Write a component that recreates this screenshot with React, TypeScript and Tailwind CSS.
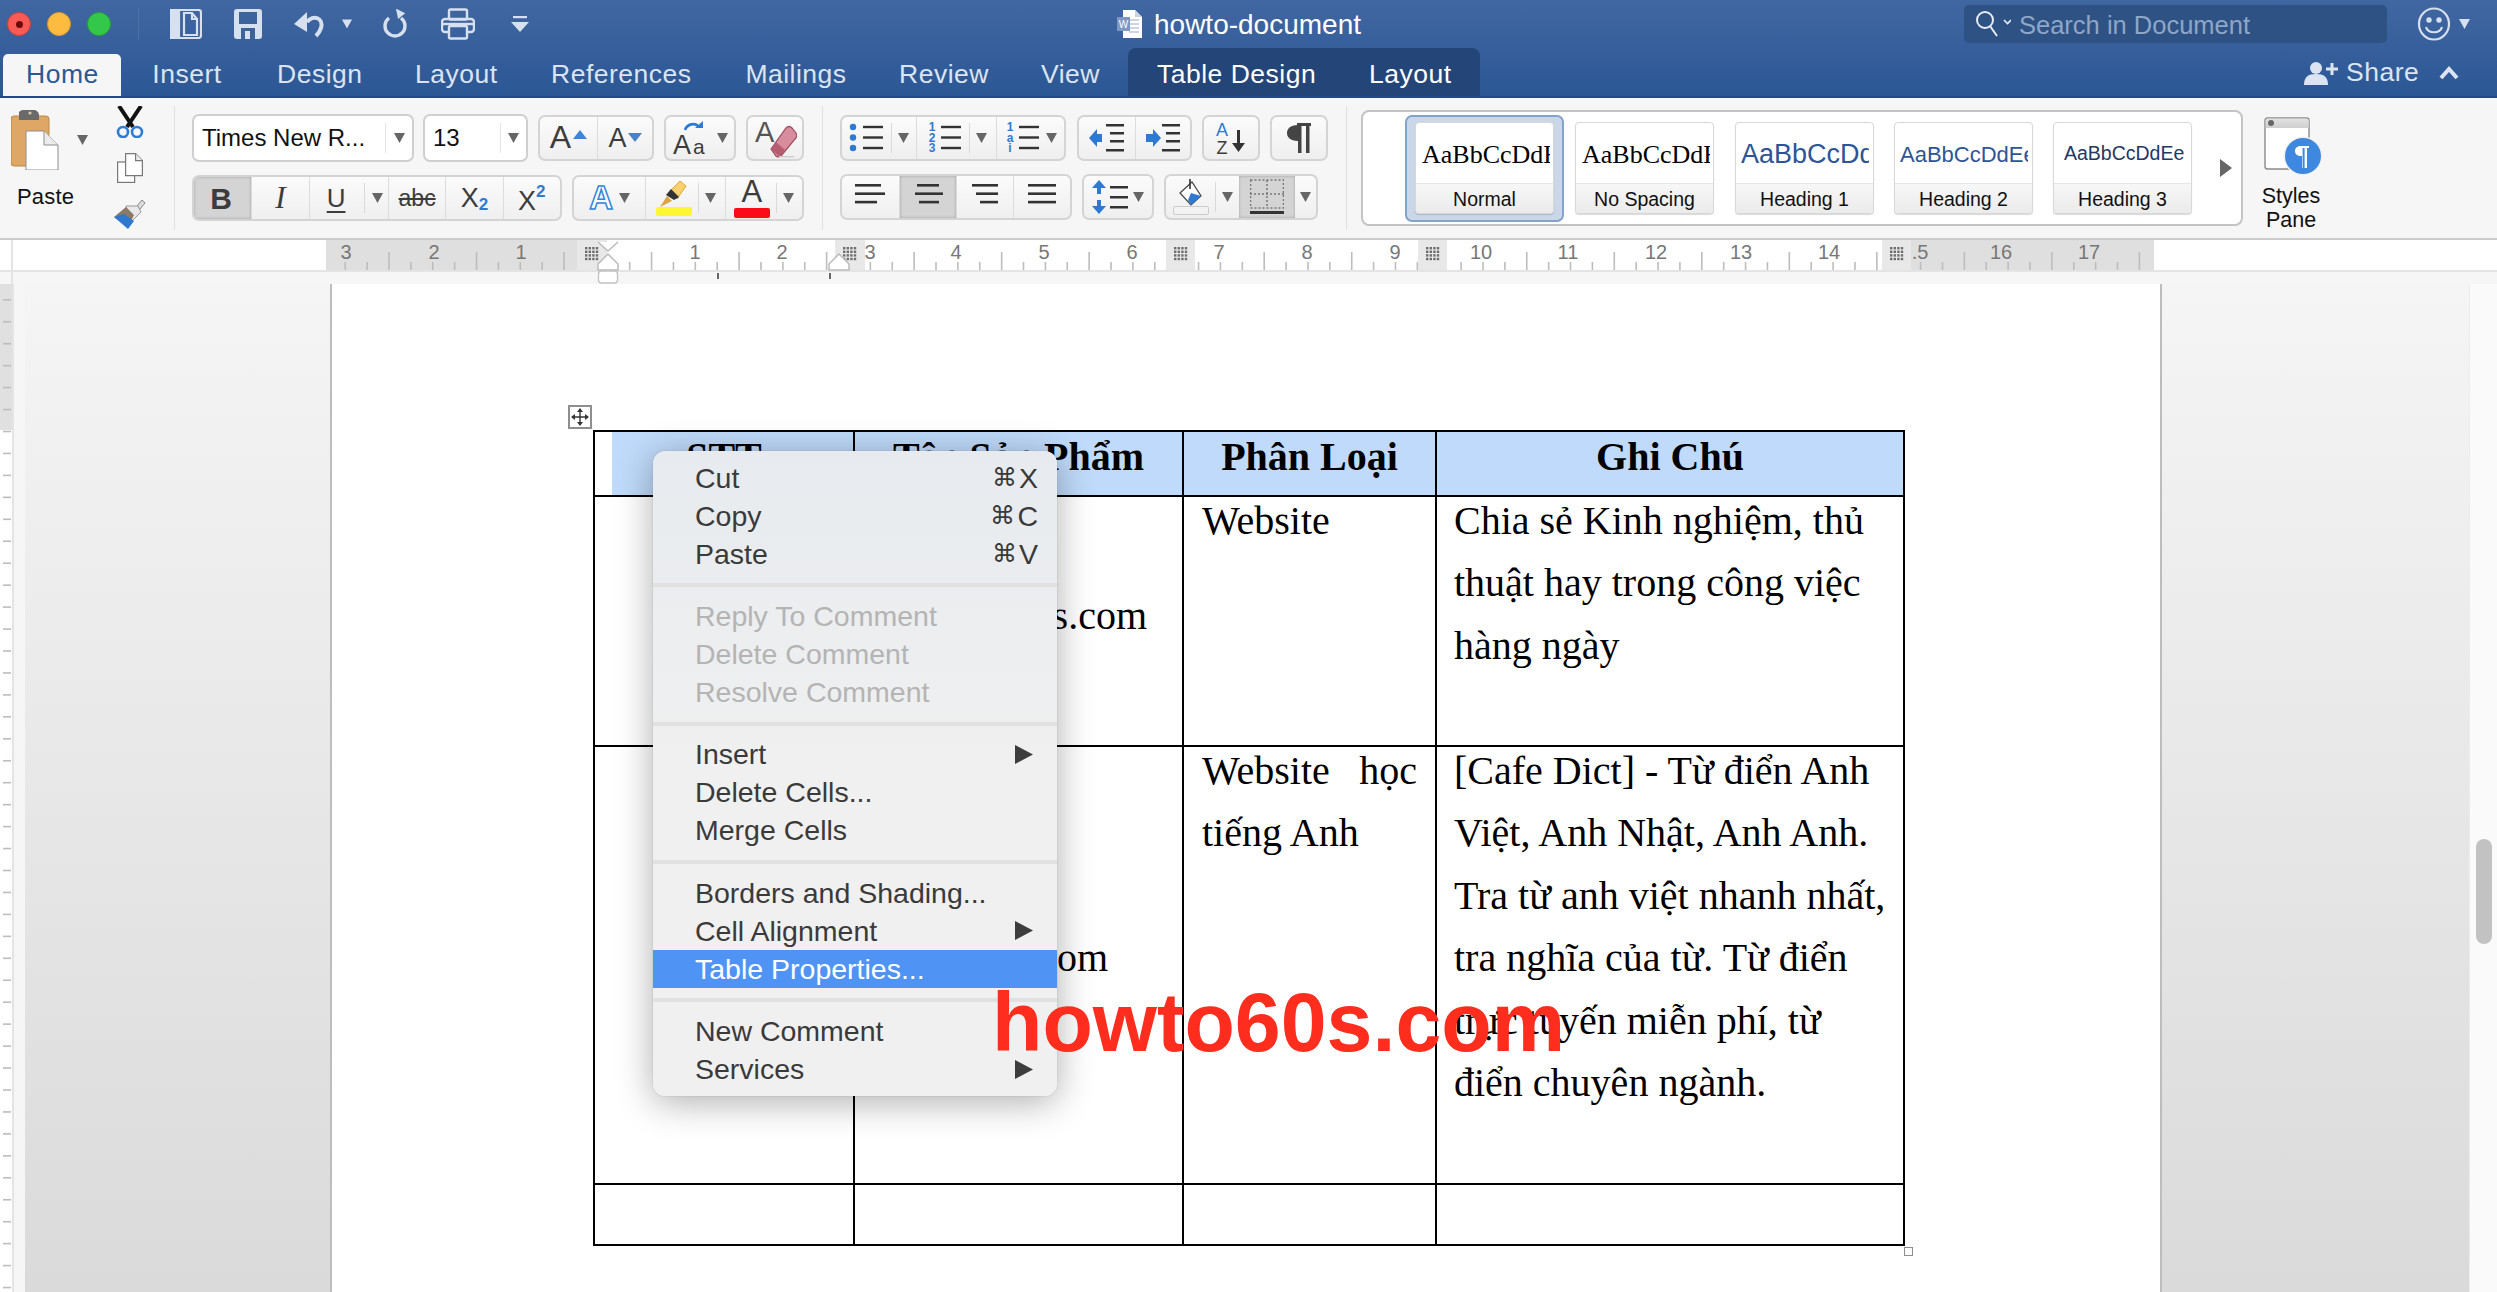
import React from "react";

const Arrow = ({ c = "#666" }: { c?: string }) => (
  <svg width="11" height="10" viewBox="0 0 11 10" className="shrink-0"><path d="M0 0h11L5.5 10z" fill={c} /></svg>
);

const Group = ({ className = "", children }: { className?: string; children: React.ReactNode }) => (
  <div className={"flex h-[46px] overflow-hidden rounded-[7px] border-2 border-[#d4d4d4] bg-gradient-to-b from-[#fbfbfb] to-[#efefef] " + className}>{children}</div>
);

const Cell = ({ className = "", active = false, first = false, children }: { className?: string; active?: boolean; first?: boolean; children?: React.ReactNode }) => (
  <div className={"flex h-full items-center text-[#3c3c3c] " + (first ? "" : "border-l border-[#dcdcdc] ") + (active ? "bg-[#d4d4d4] shadow-[inset_0_0_3px_rgba(0,0,0,0.25)] " : "") + className}>{children}</div>
);

const Split = () => <div className="mx-[6px] h-[30px] w-[1px] bg-[#dadada]" />;

const Lines = ({ xs }: { xs: [number, number][] }) => (
  <svg width="34" height="28" viewBox="0 0 34 28">
    {xs.map(([a, b], i) => (
      <rect key={i} x={a} y={1 + i * 8.4} width={b - a} height="2.6" fill="#333" />
    ))}
  </svg>
);

const Bullets = ({ labels }: { labels?: string[] }) => (
  <svg width="36" height="32" viewBox="0 0 36 32">
    {[0, 1, 2].map((i) => (
      <g key={i}>
        {labels ? (
          <text x="5" y={9 + i * 10.5} textAnchor="middle" fontSize="12" fontWeight="700" fontFamily="Liberation Sans, sans-serif" fill="#2e7ad3">{labels[i]}</text>
        ) : (
          <circle cx="4" cy={5 + i * 10.5} r="3.2" fill="#2e7ad3" />
        )}
        <rect x={14} y={3.8 + i * 10.5} width="20" height="2.4" fill="#333" />
      </g>
    ))}
  </svg>
);

const Card = ({ label, preview, className = "" }: { label: string; preview: React.ReactNode; className?: string }) => (
  <div className={"flex h-[92px] w-[139px] shrink-0 flex-col overflow-hidden rounded-[4px] border border-[#d8d8d8] bg-white shadow-[0_1px_1px_rgba(0,0,0,0.15)] " + className}>
    <div className="flex h-[62px] items-center overflow-hidden whitespace-nowrap pt-[2px]">{preview}</div>
    <div className="flex h-[30px] items-center justify-center border-t border-[#e6e6e6] bg-gradient-to-b from-[#f7f7f7] to-[#ebebeb] pt-[2px] text-[19.5px] text-[#111]">{label}</div>
  </div>
);

const Tab = ({ className, children }: { className: string; children: React.ReactNode }) => (
  <span className={"block whitespace-nowrap text-center " + className}>{children}</span>
);

const Ruler = () => {
  const ticks: React.ReactNode[] = [];
  const origin = 607;
  const step = 21.88;
  for (let n = -12; n <= 70; n++) {
    const x = origin + n * step;
    if (x < 327 || x > 2152) continue;
    const long = ((n % 4) + 4) % 4 === 2;
    ticks.push(<rect key={n} x={x} y={long ? 12 : 22} width="1.6" height={long ? 18 : 8} fill="#bdbdbd" />);
  }
  const nums: [string, number][] = [["3", 346], ["2", 434], ["1", 521], ["1", 695], ["2", 782], ["3", 870], ["4", 956], ["5", 1044], ["6", 1132], ["7", 1219], ["8", 1307], ["9", 1395], ["10", 1481], ["11", 1568], ["12", 1656], ["13", 1741], ["14", 1829], [".5", 1920], ["16", 2001], ["17", 2089]];
  const markers: [number, number][] = [[577, 607], [835, 865], [1166, 1195], [1418, 1447], [1882, 1911]];
  return (
    <svg width="2497" height="44" viewBox="0 0 2497 44" className="block">
      <rect x="0" y="0" width="2497" height="44" fill="#f6f6f6" />
      <rect x="0" y="0" width="2497" height="30" fill="#ffffff" />
      <rect x="11" y="0" width="2" height="44" fill="#e4e4e4" />
      <rect x="326" y="0" width="251" height="30" fill="#dfdfdf" />
      <rect x="1885" y="0" width="269" height="30" fill="#dfdfdf" />
      {ticks}
      {nums.map(([t, x], i) => (
        <text key={i} x={x} y="19" textAnchor="middle" fontSize="20" fontFamily="Liberation Sans, sans-serif" fill="#777">{t}</text>
      ))}
      {markers.map(([a, b], i) => (
        <g key={i}>
          <rect x={a} y="0" width={b - a} height="31" fill="#e8e8e8" />
          {[0, 1, 2, 3].map((r) => [0, 1, 2, 3].map((c) => (
            <rect key={r + "-" + c} x={a + 8 + c * 3.6} y={7 + r * 3.6} width="2.4" height="2.4" fill="#6e6e6e" />
          )))}
        </g>
      ))}
      <rect x="0" y="30" width="2497" height="2" fill="#e4e4e4" />
      <path d="M598 2l10 9 10-9M598 24l10-10 10 10v6h-20z" fill="#fff" stroke="#bbb" strokeWidth="1.5" />
      <path d="M829 24l10-10 10 10v6h-20z" fill="#fff" stroke="#bbb" strokeWidth="1.5" />
      <rect x="598.5" y="31" width="19" height="12" rx="3" fill="#fff" stroke="#c4c4c4" strokeWidth="1.4" />
      <rect x="717" y="33" width="2" height="6" fill="#666" />
      <rect x="829" y="33" width="2" height="6" fill="#666" />
    </svg>
  );
};

const VRuler = () => {
  const t: React.ReactNode[] = [];
  for (let i = 0; i < 46; i++) t.push(<rect key={i} x="3" y={15 + i * 21.95} width="8" height="1.6" fill="#bdbdbd" />);
  return (
    <svg width="12" height="1008" viewBox="0 0 12 1008" className="block shrink-0">
      <rect width="12" height="1008" fill="#fff" />
      <rect width="12" height="146" fill="#e0e0e0" />
      {t}
    </svg>
  );
};

const menuRow = "flex h-[38.1px] items-center pl-[42px] pr-[19px] whitespace-nowrap";
const MenuSep = () => (
  <div className="flex h-[24px] items-center"><div className="h-[4px] w-full bg-[#e1e1e1]" /></div>
);
const Sub = () => (
  <svg width="18" height="19" viewBox="0 0 18 19" className="ml-auto mr-[5px]"><path d="M0 0l18 9.5L0 19z" fill="#3d3d3d" /></svg>
);
const Item = ({ label, sc, sub, dis, hi }: { label: string; sc?: string; sub?: boolean; dis?: boolean; hi?: boolean }) => (
  <div className={menuRow + (hi ? " bg-[#4f94f4] text-white" : dis ? " text-[#b4b4b4]" : " text-[#3a3a3a]")}>
    <span>{label}</span>
    {sc && <span className="ml-auto flex items-center"><span className="text-[25px]">⌘</span><span className="ml-[2px]">{sc}</span></span>}
    {sub && <Sub />}
  </div>
);

const TimesLine = ({ children }: { children: React.ReactNode }) => <div className="whitespace-nowrap">{children}</div>;

const Clip = ({ className, children }: { className: string; children: React.ReactNode }) => (
  <div className={"w-[128px] overflow-hidden whitespace-nowrap " + className}>{children}</div>
);

export default function App() {
  return (
    <div className="relative h-[1292px] w-[2497px] overflow-hidden bg-white font-['Liberation_Sans',sans-serif]">
      {/* Title + tabs */}
      <div className="h-[98px] border-b-2 border-[#234a82] bg-gradient-to-b from-[#4167a1] to-[#2b5795]">
        <div className="flex h-[48px] items-center">
          <div className="ml-[7px] flex gap-[16px]">
            <div className="flex h-[24px] w-[24px] items-center justify-center rounded-full border border-[#c9403c] bg-[#fb5a55]"><div className="h-[7px] w-[7px] rounded-full bg-[#6b0a08]" /></div>
            <div className="h-[24px] w-[24px] rounded-full border border-[#d59a30] bg-[#fdbc40]" />
            <div className="h-[24px] w-[24px] rounded-full border border-[#2aa03a] bg-[#34c84a]" />
          </div>
          <div className="ml-[27px] h-[32px] w-[1px] bg-[#4f72a6]" />
          <svg className="ml-[31px]" width="32" height="30" viewBox="0 0 32 30" fill="none" stroke="#d6e0ee" strokeWidth="2.2">
            <rect x="1" y="1" width="30" height="28" rx="2.5" />
            <rect x="1" y="1" width="8" height="28" fill="#d6e0ee" />
            <path d="M14 4h8l5 6v16H14zM22 4v6h5" />
          </svg>
          <svg className="ml-[32px]" width="28" height="30" viewBox="0 0 28 30">
            <path d="M3 0h22a3 3 0 013 3v24a3 3 0 01-3 3H3a3 3 0 01-3-3V3a3 3 0 013-3z" fill="#d6e0ee" />
            <rect x="5" y="3" width="18" height="12" fill="#3c639c" />
            <rect x="7" y="19" width="14" height="11" fill="#3c639c" />
            <rect x="11" y="22" width="5" height="8" fill="#d6e0ee" />
          </svg>
          <svg className="ml-[32px]" width="32" height="28" viewBox="0 0 32 28" fill="none">
            <path d="M13 12c6-8 17-4 14 6-1 3-3 6-5 8" stroke="#d6e0ee" strokeWidth="4" />
            <path d="M0 14L13 2v20z" fill="#d6e0ee" />
          </svg>
          <svg className="ml-[16px]" width="10" height="10" viewBox="0 0 11 10"><path d="M0 0h11L5.5 10z" fill="#d6e0ee" /></svg>
          <svg className="ml-[30px]" width="26" height="30" viewBox="0 0 26 30" fill="none">
            <path d="M7 9a10 10 0 1012 0" stroke="#d6e0ee" strokeWidth="3.4" />
            <path d="M13 0l10 3-6 7z" fill="#d6e0ee" transform="rotate(10 16 5)" />
          </svg>
          <svg className="ml-[33px]" width="34" height="32" viewBox="0 0 34 32" fill="none" stroke="#d6e0ee" strokeWidth="2.4">
            <rect x="8" y="1.5" width="18" height="10" rx="1.5" />
            <path d="M8 24H4a3 3 0 01-3-3v-7a3 3 0 013-3h26a3 3 0 013 3v7a3 3 0 01-3 3h-4" />
            <rect x="8" y="18" width="18" height="12.5" rx="1.5" />
            <path d="M2 16h30" />
          </svg>
          <svg className="ml-[36px]" width="18" height="16" viewBox="0 0 18 16"><rect x="2" y="0" width="14" height="2.2" fill="#d6e0ee" /><path d="M0 6h18l-9 10z" fill="#d6e0ee" /></svg>
          {/* Document title */}
          <svg className="ml-[588px]" width="26" height="28" viewBox="0 0 26 28">
            <path d="M6 0h12l7 7v21H6z" fill="#fff" />
            <path d="M18 0v7h7z" fill="#c9d3e2" />
            <path d="M12 10h10M12 14h10M12 18h10M12 22h10" stroke="#bcc7d8" strokeWidth="1.4" />
            <rect x="0" y="7" width="13" height="14" fill="#7e97c3" />
            <text x="6.5" y="18" textAnchor="middle" fontSize="10" fontFamily="Liberation Sans, sans-serif" fill="#fff">W</text>
          </svg>
          <div className="ml-[11px] w-[207px] whitespace-nowrap pt-[2px] text-[28px] text-white">howto-document</div>
          {/* Search */}
          <div className="ml-[603px] flex h-[38px] w-[423px] items-center rounded-[5px] bg-[#2f5284] pl-[11px] text-[25.5px] text-[#8ea6c8]">
            <svg width="36" height="28" viewBox="0 0 36 28" fill="none" stroke="#e6ecf5" strokeWidth="2">
              <circle cx="10" cy="10" r="8" />
              <path d="M15 16l7 10" />
              <path d="M29 10l3.5 3.5L36 10" strokeWidth="1.6" />
            </svg>
            <span className="ml-[8px] whitespace-nowrap pt-[2px]">Search in Document</span>
          </div>
          <svg className="ml-[30px]" width="34" height="34" viewBox="0 0 34 34" fill="none" stroke="#d6e0ee" strokeWidth="2.2">
            <ellipse cx="17" cy="17" rx="15" ry="15.5" />
            <circle cx="12" cy="13" r="1.6" fill="#d6e0ee" />
            <circle cx="22" cy="13" r="1.6" fill="#d6e0ee" />
            <path d="M9 20c2 7 14 7 16 0" />
          </svg>
          <svg className="ml-[8px]" width="11" height="10" viewBox="0 0 11 10"><path d="M0 0h11L5.5 10z" fill="#d6e0ee" /></svg>
        </div>
        <div className="flex h-[48px] items-end text-[26.5px] tracking-[0.5px] text-[#dbe4f0]">
          <div className="ml-[3px] flex h-[42px] w-[118px] items-center justify-center rounded-t-[5px] bg-[#f6f6f6] text-[#2b5797]"><Tab className="w-[72px]">Home</Tab></div>
          <div className="flex h-[48px] items-center gap-[54px] pl-[30px] pt-[6px]">
            <Tab className="w-[72px]">Insert</Tab>
            <Tab className="w-[84px]">Design</Tab>
            <Tab className="w-[82px]">Layout</Tab>
            <Tab className="w-[138px]">References</Tab>
            <Tab className="w-[106px]">Mailings</Tab>
            <Tab className="w-[88px] ml-[-4px]">Review</Tab>
            <Tab className="w-[58px]">View</Tab>
          </div>
          <div className="ml-[29px] flex h-[48px] w-[352px] items-center gap-[54px] rounded-t-[8px] bg-[#234578] pl-[29px] pt-[6px] text-white">
            <Tab className="w-[158px]">Table Design</Tab>
            <Tab className="w-[82px]">Layout</Tab>
          </div>
          <div className="ml-[824px] flex h-[48px] items-center pt-[2px]">
            <svg width="34" height="24" viewBox="0 0 34 24" fill="#dbe4f0">
              <circle cx="12" cy="7" r="6" />
              <path d="M0 24c0-8 4-11 12-11s12 3 12 11z" />
              <path d="M22 8h12M28 2v12" stroke="#dbe4f0" strokeWidth="3" />
            </svg>
            <span className="ml-[8px] w-[70px] whitespace-nowrap">Share</span>
            <svg className="ml-[23px]" width="20" height="14" viewBox="0 0 20 14" fill="none" stroke="#dbe4f0" strokeWidth="4"><path d="M2 12l8-9 8 9" /></svg>
          </div>
        </div>
      </div>

      {/* Ribbon */}
      <div className="flex h-[142px] border-b-2 border-[#cccccc] bg-[#f6f6f6]">
        {/* Clipboard */}
        <div className="flex w-[174px] shrink-0">
          <div className="flex w-[113px] shrink-0 flex-col pl-[11px] pt-[12px]">
            <div className="flex items-center">
              <svg width="48" height="60" viewBox="0 0 48 60">
                <rect x="0" y="6" width="38" height="50" rx="3" fill="#dfa765" stroke="#b98848" />
                <path d="M8 2c0 0 2-2 4-2h0c1-2 8-2 9 0h2c2 0 5 2 5 5v5H8z" fill="#6a6a6a" />
                <circle cx="19" cy="3" r="1.6" fill="#dcc7a5" />
                <path d="M15 21h18l14 14v25H15z" fill="#fff" stroke="#8e8e8e" />
                <path d="M33 21v14h14" fill="#ececec" stroke="#8e8e8e" />
              </svg>
              <div className="ml-[18px]"><Arrow /></div>
            </div>
            <div className="ml-[6px] mt-[14px] text-[22px] leading-[26px] tracking-[0.2px] text-[#111]">Paste</div>
          </div>
          <div className="flex w-[34px] shrink-0 flex-col items-center pt-[8px]">
            <svg width="28" height="32" viewBox="0 0 28 32" fill="none">
              <path d="M3 0l14 21M25 0L11 21" stroke="#111" strokeWidth="4" />
              <circle cx="7" cy="26" r="5" stroke="#2c7cd6" strokeWidth="2.6" />
              <circle cx="21" cy="26" r="5" stroke="#2c7cd6" strokeWidth="2.6" />
            </svg>
            <svg className="mt-[15px]" width="26" height="30" viewBox="0 0 26 30" fill="#fff" stroke="#777" strokeWidth="1.2">
              <rect x="0.6" y="9" width="17" height="20.4" />
              <path d="M8.6 0.6h10l6.8 7v15H8.6z" />
              <path d="M18.6 0.6v7h6.8" fill="#eee" />
            </svg>
            <svg className="mt-[16px]" width="32" height="30" viewBox="0 0 32 30">
              <path d="M23 7l5-6 3 3-5 6z" fill="#ddd" stroke="#888" />
              <path d="M12 7l12 0 3 6L16 24z" fill="#e9e9e9" stroke="#999" />
              <path d="M0 18l12-10 8 8-6 12z" fill="#8b7a68" />
              <path d="M0 18l14 12 6-8-10-7z" fill="#2f78cf" />
            </svg>
          </div>
        </div>
        <div className="mt-[8px] h-[124px] w-[1px] bg-[#e0e0e0]" />
        {/* Font */}
        <div className="ml-[17px] flex w-[612px] shrink-0 flex-col pt-[16px]">
          <div className="flex items-center">
            <div className="flex h-[48px] w-[222px] items-center rounded-[7px] border-2 border-[#cfcfcf] bg-white pl-[8px] text-[24px] text-[#111]">
              <span className="w-[183px] whitespace-nowrap">Times New R...</span>
              <div className="mr-[8px] h-[30px] w-[1px] bg-[#e4e4e4]" />
              <Arrow />
            </div>
            <div className="ml-[9px] flex h-[48px] w-[105px] items-center rounded-[7px] border-2 border-[#cfcfcf] bg-white pl-[8px] text-[24px] text-[#111]">
              <span className="w-[67px]">13</span>
              <div className="mr-[7px] h-[30px] w-[1px] bg-[#e4e4e4]" />
              <Arrow />
            </div>
            <Group className="ml-[10px]">
              <Cell first className="w-[57px] justify-center text-[32px]">
                <span className="mt-[-2px]">A</span>
                <svg className="mb-[8px] ml-[2px]" width="14" height="9" viewBox="0 0 14 9"><path d="M7 0l7 9H0z" fill="#3b86d9" /></svg>
              </Cell>
              <Cell className="w-[55px] justify-center text-[27px]">
                <span>A</span>
                <svg className="mb-[2px] ml-[1px]" width="14" height="9" viewBox="0 0 14 9"><path d="M7 9l7-9H0z" fill="#4b83c6" /></svg>
              </Cell>
            </Group>
            <Group className="ml-[10px] w-[72px]">
              <Cell first className="w-full justify-center">
                <svg width="36" height="34" viewBox="0 0 36 34">
                  <path d="M12 9c2-6 10-8 14-3" fill="none" stroke="#2e7ad3" strokeWidth="2.6" />
                  <path d="M22 7h8V0z" fill="#2e7ad3" />
                  <text x="0" y="33" fontSize="27" fontFamily="Liberation Sans, sans-serif" fill="#3c3c3c">A</text>
                  <text x="20" y="33" fontSize="21" fontFamily="Liberation Sans, sans-serif" fill="#3c3c3c">a</text>
                </svg>
                <div className="ml-[8px]"><Arrow /></div>
              </Cell>
            </Group>
            <Group className="ml-[10px] w-[58px]">
              <Cell first className="w-full justify-center">
                <svg width="44" height="40" viewBox="0 0 44 40">
                  <text x="2" y="24" fontSize="29" fontFamily="Liberation Sans, sans-serif" fill="#555">A</text>
                  <path d="M18 31L33 10c2-2 4-2 6 0l4 5c1 2 1 3 0 5L28 38c-2 1-4 1-5 0z" fill="#d88d9f" stroke="#9c4d60" strokeWidth="1.2" />
                  <path d="M18 31l5-7 9 8-5 7z" fill="#b85c72" />
                  <rect x="26" y="38" width="15" height="1.4" fill="#ccc" />
                </svg>
              </Cell>
            </Group>
          </div>
          <div className="mt-[13px] flex">
            <Group className="w-[370px]">
              <Cell first active className="w-[58px] justify-center text-[30px] font-bold"><span className="ml-[-3px]">B</span></Cell>
              <Cell className="w-[58px] justify-center font-['Liberation_Serif',serif] text-[31px] italic">I</Cell>
              <Cell className="w-[80px] justify-start pl-[17px] text-[26px]">
                <span className="underline decoration-2 underline-offset-[4px]">U</span>
                <div className="ml-[19px] mr-[7px] h-[30px] w-[1px] bg-[#dadada]" />
                <Arrow />
              </Cell>
              <Cell className="w-[58px] justify-center text-[23px] line-through">abc</Cell>
              <Cell className="w-[58px] justify-center text-[27px]"><span>X</span><span className="mt-[14px] text-[17px] font-bold text-[#2e7ad3]">2</span></Cell>
              <Cell className="w-[58px] justify-center text-[27px]"><span className="mt-[6px]">X</span><span className="mb-[12px] text-[17px] font-bold text-[#2e7ad3]">2</span></Cell>
            </Group>
            <Group className="ml-[10px] w-[232px]">
              <Cell first className="w-[72px] justify-center">
                <span className="text-[33px] font-bold text-white [-webkit-text-stroke:1.5px_#3085de]">A</span>
                <div className="ml-[6px]"><Arrow /></div>
              </Cell>
              <Cell className="w-[80px] justify-center">
                <div className="flex flex-col items-center">
                  <svg width="28" height="26" viewBox="0 0 28 26">
                    <path d="M10 10L20 0l6 5-9 13z" fill="#fcd06c" stroke="#d9a640" />
                    <path d="M6 14l5-6 8 8-5 3z" fill="#333" />
                    <path d="M0 26l7-11 5 5z" fill="#d9a640" />
                  </svg>
                  <div className="h-[9px] w-[36px] rounded-[2px] bg-[#fdf733]" />
                </div>
                <Split />
                <Arrow />
              </Cell>
              <Cell className="w-[78px] justify-center">
                <div className="flex flex-col items-center">
                  <span className="text-[31px] leading-[28px]">A</span>
                  <div className="mt-[2px] h-[10px] w-[36px] rounded-[2px] bg-[#fb0a18]" />
                </div>
                <Split />
                <Arrow />
              </Cell>
            </Group>
          </div>
        </div>
        <div className="ml-[18px] mt-[8px] h-[124px] w-[1px] bg-[#e0e0e0]" />
        {/* Paragraph */}
        <div className="ml-[17px] flex w-[488px] shrink-0 flex-col pt-[17px]">
          <div className="flex">
            <Group className="w-[226px]">
              <Cell first className="w-[74px] justify-center"><Bullets /><Split /><Arrow /></Cell>
              <Cell className="w-[80px] justify-center"><Bullets labels={["1", "2", "3"]} /><Split /><Arrow /></Cell>
              <Cell className="w-[68px] justify-center"><Bullets labels={["1", "a", "i"]} /><div className="ml-[5px]"><Arrow /></div></Cell>
            </Group>
            <Group className="ml-[11px] w-[115px]">
              <Cell first className="w-[57px] justify-center">
                <svg width="36" height="32" viewBox="0 0 36 32">
                  <path d="M0 16l8-9v5h5v8H8v5z" fill="#2e7ad3" />
                  <path d="M17 2h18v2.6H17zM21 10h14v2.6H21zM21 18h14v2.6H21zM17 27h18v2.6H17z" fill="#333" />
                </svg>
              </Cell>
              <Cell className="w-[56px] justify-center">
                <svg width="36" height="32" viewBox="0 0 36 32">
                  <path d="M16 16l-8-9v5H1v8h7v5z" fill="#2e7ad3" />
                  <path d="M17 2h18v2.6H17zM21 10h14v2.6H21zM21 18h14v2.6H21zM17 27h18v2.6H17z" fill="#333" />
                </svg>
              </Cell>
            </Group>
            <Group className="ml-[10px] w-[58px]">
              <Cell first className="w-full justify-center">
                <svg width="32" height="34" viewBox="0 0 32 34">
                  <text x="7" y="15" textAnchor="middle" fontSize="18" fontFamily="Liberation Sans, sans-serif" fill="#2e7ad3">A</text>
                  <text x="7" y="33" textAnchor="middle" fontSize="18" fontFamily="Liberation Sans, sans-serif" fill="#3c3c3c">Z</text>
                  <path d="M22 9h3v13h5l-6.500 9-6.500-9h5z" fill="#333" />
                </svg>
              </Cell>
            </Group>
            <Group className="ml-[10px] w-[58px]">
              <Cell first className="w-full justify-center">
                <svg width="26" height="32" viewBox="0 0 26 32">
                  <path d="M12 3C4 3 1 7 1 11s3 8 11 8z" fill="#444" />
                  <rect x="11" y="1" width="14" height="3" fill="#444" />
                  <rect x="12" y="1" width="3.500" height="30" fill="#444" />
                  <rect x="20" y="1" width="3.500" height="30" fill="#444" />
                </svg>
              </Cell>
            </Group>
          </div>
          <div className="mt-[13px] flex">
            <Group className="w-[232px]">
              <Cell first className="w-[58px] justify-center"><div className="ml-[4px]"><Lines xs={[[0, 26], [0, 30], [0, 22]]} /></div></Cell>
              <Cell active className="w-[58px] justify-center"><div className="ml-[8px]"><Lines xs={[[2, 24], [0, 28], [4, 24]]} /></div></Cell>
              <Cell className="w-[58px] justify-center"><div className="ml-[8px]"><Lines xs={[[0, 26], [4, 26], [8, 26]]} /></div></Cell>
              <Cell className="w-[58px] justify-center"><div className="ml-[6px]"><Lines xs={[[0, 28], [0, 28], [0, 28]]} /></div></Cell>
            </Group>
            <Group className="ml-[10px] w-[72px]">
              <Cell first className="w-full justify-center">
                <svg width="36" height="34" viewBox="0 0 36 34">
                  <path d="M7 0l7 8H9v6H5V8H0z" fill="#2e7ad3" />
                  <path d="M7 34l7-8H9v-6H5v6H0z" fill="#2e7ad3" />
                  <path d="M18 6h18v2.600H18zM18 16h18v2.600H18zM18 26h18v2.600H18z" fill="#333" />
                </svg>
                <div className="ml-[5px]"><Arrow /></div>
              </Cell>
            </Group>
            <Group className="ml-[10px] w-[154px]">
              <Cell first className="w-[73px] justify-center">
                <div className="flex flex-col items-center">
                  <svg width="26" height="27" viewBox="0 0 26 27">
                    <path d="M2 14L14 3l9 14-10 9z" fill="#fff" stroke="#444" strokeWidth="1.200" />
                    <path d="M13 14l10 3-10 9-3-5z" fill="#2e7ad3" />
                    <path d="M12 0v10" stroke="#333" strokeWidth="1.600" />
                  </svg>
                  <div className="h-[9px] w-[36px] rounded-[2px] border border-[#ccc] bg-[#f2f2f2]" />
                </div>
                <Split />
                <Arrow />
              </Cell>
              <Cell active className="w-[56px] justify-center border-l-0">
                <svg width="34" height="36" viewBox="0 0 34 36" fill="none">
                  <rect x="0.500" y="1" width="33" height="28" stroke="#777" strokeWidth="1.500" strokeDasharray="2 2" />
                  <path d="M17 1v28M0 15h34" stroke="#777" strokeWidth="1.500" strokeDasharray="2 2" />
                  <rect x="0" y="32" width="34" height="3" fill="#333" />
                </svg>
              </Cell>
              <div className="flex flex-1 items-center justify-center"><Arrow /></div>
            </Group>
          </div>
        </div>
        <div className="ml-[18px] mt-[8px] h-[124px] w-[1px] bg-[#e0e0e0]" />
        {/* Styles gallery */}
        <div className="ml-[14px] mt-[12px] flex h-[116px] w-[882px] shrink-0 items-center rounded-[8px] border-2 border-[#c4c4c4] bg-white pl-[42px]">
          <div className="flex h-[107px] w-[159px] shrink-0 items-center justify-center rounded-[7px] border-2 border-[#84a3cb] bg-[#c9d7e9]">
            <Card label="Normal" preview={<Clip className="ml-[6px] font-['Liberation_Serif',serif] text-[26px] text-black">AaBbCcDdEe</Clip>} />
          </div>
          <Card className="ml-[11px]" label="No Spacing" preview={<Clip className="ml-[6px] font-['Liberation_Serif',serif] text-[26px] text-black">AaBbCcDdEe</Clip>} />
          <Card className="ml-[21px]" label="Heading 1" preview={<Clip className="ml-[5px] text-[27px] text-[#2f5496]">AaBbCcDdEe</Clip>} />
          <Card className="ml-[20px]" label="Heading 2" preview={<Clip className="ml-[5px] text-[22px] text-[#2f5496]">AaBbCcDdEe</Clip>} />
          <Card className="ml-[20px]" label="Heading 3" preview={<Clip className="ml-[10px] text-[19.500px] text-[#1f3864]">AaBbCcDdEe</Clip>} />
          <svg className="ml-[28px]" width="12" height="18" viewBox="0 0 12 18"><path d="M0 0l12 9-12 9z" fill="#666" /></svg>
        </div>
        {/* Styles Pane */}
        <div className="ml-[18px] flex w-[60px] shrink-0 flex-col items-center pt-[19px]">
          <svg width="64" height="58" viewBox="0 0 64 58">
            <defs>
              <linearGradient id="paneTop" x1="0" y1="0" x2="0" y2="1"><stop offset="0" stopColor="#e2e2e2" /><stop offset="1" stopColor="#cfcfcf" /></linearGradient>
            </defs>
            <rect x="6" y="1" width="44" height="51" rx="2.500" fill="#fff" stroke="#8a8a8a" strokeWidth="1.400" />
            <path d="M6.700 11V3.500a2 2 0 012-2h39a2 2 0 012 2V11z" fill="url(#paneTop)" />
            <circle cx="12" cy="6" r="3" fill="#666" />
            <circle cx="44" cy="39" r="19.500" fill="#f2f2f2" />
            <circle cx="44" cy="39" r="18" fill="#3f88df" />
            <path d="M43 29c-5 0-7 2-7 5s2 5 7 5zM41 29h9v2h-2v20h-2.400V31h-2v20H43V29z" fill="#fff" />
          </svg>
          <div className="mt-[9px] whitespace-nowrap text-center text-[21.500px] leading-[24px] text-[#111]">Styles<br />Pane</div>
        </div>
      </div>

      {/* Ruler */}
      <Ruler />

      {/* Document */}
      <div className="flex h-[1008px]">
        <VRuler />
        <div className="w-[13px] shrink-0 border-l-2 border-[#e4e4e4] bg-[#f6f6f6]" />
        <div className="flex flex-1 justify-start bg-gradient-to-b from-[#f5f5f5] to-[#dadada] pl-[305px] pr-[307px]">
          <div className="h-full w-[1832px] shrink-0 border-x-2 border-[#bdbdbd] bg-white pl-[261px] pt-[146px]">
            <div className="relative w-[1310px]">
              {/* table move handle */}
              <div className="absolute left-[-25px] top-[-25px] flex h-[24px] w-[24px] items-center justify-center border-2 border-[#8e8e8e] bg-white">
                <svg width="18" height="18" viewBox="0 0 18 18" fill="#333"><path d="M8.300 3h1.400v12H8.300zM3 8.300h12v1.400H3z" /><path d="M9 0l3 4H6zM9 18l3-4H6zM0 9l4-3v6zM18 9l-4-3v6z" /></svg>
              </div>
              <div className="absolute bottom-[-10px] right-[-10px] h-[9px] w-[9px] border-[1.5px] border-[#8e8e8e] bg-white" />
              <table className="w-[1310px] table-fixed border-collapse border-2 border-black font-['Liberation_Serif','Noto_Sans_CJK_SC',serif] text-[40px] leading-[62.4px] text-black">
                <colgroup>
                  <col className="w-[260px]" />
                  <col className="w-[329px]" />
                  <col className="w-[253px]" />
                  <col className="w-[468px]" />
                </colgroup>
                <tbody>
                  <tr className="h-[65px] font-bold">
                    <td className="border-2 border-black p-0 align-top"><div className="ml-[17px] h-[63px] bg-[#bfdafa] pr-[17px] text-center leading-[50px]">STT</div></td>
                    <td className="border-2 border-black bg-[#bfdafa] p-0 text-center align-top leading-[50px]">Tên Sản Phẩm</td>
                    <td className="border-2 border-black bg-[#bfdafa] p-0 text-center align-top leading-[50px]">Phân Loại</td>
                    <td className="border-2 border-black bg-[#bfdafa] p-0 text-center align-top leading-[50px]">Ghi Chú</td>
                  </tr>
                  <tr className="h-[250px]">
                    <td className="border-2 border-black p-0 text-center align-top"><div className="mt-[-7px]">1</div></td>
                    <td className="border-2 border-black p-0 pr-[35px] text-right align-top"><div className="mt-[88px]">howto60s.com</div></td>
                    <td className="border-2 border-black p-0 pl-[18px] align-top"><div className="mt-[-7px]">Website</div></td>
                    <td className="border-2 border-black p-0 pl-[17px] align-top">
                      <div className="mt-[-7px]">
                        <TimesLine>Chia sẻ Kinh nghiệm, thủ</TimesLine>
                        <TimesLine>thuật hay trong công việc</TimesLine>
                        <TimesLine>hàng ngày</TimesLine>
                      </div>
                    </td>
                  </tr>
                  <tr className="h-[438px]">
                    <td className="border-2 border-black p-0 text-center align-top"><div className="mt-[-7px]">2</div></td>
                    <td className="border-2 border-black p-0 pr-[74px] text-right align-top"><div className="mt-[180px]">cafedict.com</div></td>
                    <td className="border-2 border-black p-0 px-[18px] align-top">
                      <div className="mt-[-7px]">
                        <div className="flex justify-between"><span>Website</span><span>học</span></div>
                        <TimesLine>tiếng Anh</TimesLine>
                      </div>
                    </td>
                    <td className="border-2 border-black p-0 pl-[17px] align-top">
                      <div className="mt-[-7px]">
                        <TimesLine>[Cafe Dict] - Từ điển Anh</TimesLine>
                        <TimesLine>Việt, Anh Nhật, Anh Anh.</TimesLine>
                        <TimesLine>Tra từ anh việt nhanh nhất,</TimesLine>
                        <TimesLine>tra nghĩa của từ. Từ điển</TimesLine>
                        <TimesLine>trực tuyến miễn phí, từ</TimesLine>
                        <TimesLine>điển chuyên ngành.</TimesLine>
                      </div>
                    </td>
                  </tr>
                  <tr className="h-[61px]">
                    <td className="border-2 border-black p-0" />
                    <td className="border-2 border-black p-0" />
                    <td className="border-2 border-black p-0" />
                    <td className="border-2 border-black p-0" />
                  </tr>
                </tbody>
              </table>
            </div>
          </div>
        </div>
        <div className="w-[28px] shrink-0 border-l border-[#ececec] bg-[#fafafa] pl-[6px] pt-[555px]">
          <div className="h-[105px] w-[16px] rounded-full bg-[#c2c2c2]" />
        </div>
      </div>

      {/* Context menu */}
      <div className="absolute left-[653px] top-[451px] w-[404px] rounded-[12px] bg-gradient-to-b from-[#e7ebef] via-[#f0f0f0] to-[#f0f0f0] py-[8px] text-[28.500px] shadow-[0_6px_36px_rgba(0,0,0,0.32),0_0_1px_rgba(0,0,0,0.4)]">
        <Item label="Cut" sc="X" />
        <Item label="Copy" sc="C" />
        <Item label="Paste" sc="V" />
        <MenuSep />
        <Item label="Reply To Comment" dis />
        <Item label="Delete Comment" dis />
        <Item label="Resolve Comment" dis />
        <MenuSep />
        <Item label="Insert" sub />
        <Item label="Delete Cells..." />
        <Item label="Merge Cells" />
        <MenuSep />
        <Item label="Borders and Shading..." />
        <Item label="Cell Alignment" sub />
        <Item label="Table Properties..." hi />
        <MenuSep />
        <Item label="New Comment" />
        <Item label="Services" sub />
      </div>

      {/* Watermark */}
      <div className="absolute left-[992px] top-[975px] whitespace-nowrap text-[82.500px] font-bold leading-[94px] text-[#ff2d1e]">howto60s.com</div>
    </div>
  );
}
